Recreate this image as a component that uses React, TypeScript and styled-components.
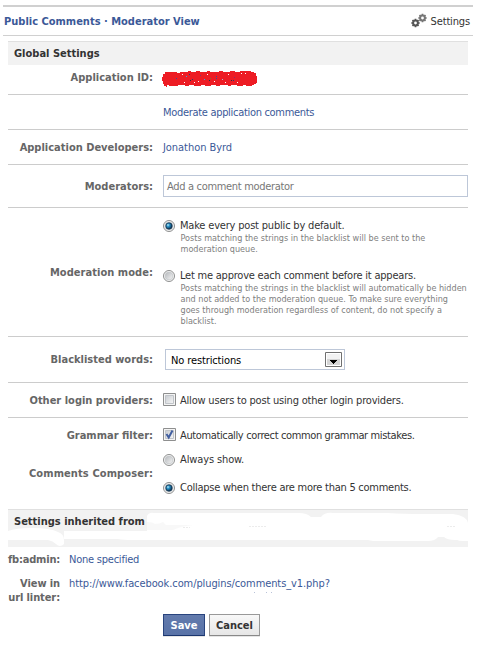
import React from "react";
import styled, { createGlobalStyle, css } from "styled-components";

const Global = createGlobalStyle`
  *, *::before, *::after { box-sizing: border-box; }
  body {
    margin: 0;
    background: #fff;
    color: #333;
    font: 11px/14px "DejaVu Sans Condensed", "DejaVu Sans", sans-serif;
    font-stretch: condensed;
  }
`;

const Page = styled.main`
  width: 479px;
  height: 648px;
  padding: 5px 6px 0 3px;
  overflow: hidden;
`;

const Header = styled.header`
  display: flex;
  justify-content: space-between;
  height: 31px;
  padding: 8px 3px 0 1px;
  border-top: 2px solid #d0d0d0;
  border-bottom: 1px solid #d0d0d0;
  white-space: nowrap;
`;

const Crumbs = styled.nav`
  color: #3b5998;
  font-weight: bold;
`;

const SettingsLink = styled.a`
  display: flex;
  gap: 4px;
  svg { display: block; margin-top: -2px; }
`;

const Text = styled.span<{ $track?: number }>`
  letter-spacing: ${(p) => p.$track ?? 0}px;
  white-space: nowrap;
`;

const Link = styled(Text)`
  color: #3b5998;
`;

const Panel = styled.section`
  width: 460px;
  margin: 5px 0 0 5px;
`;

const Band = styled.h2<{ $height: number }>`
  display: grid;
  height: ${(p) => p.$height}px;
  margin: 0;
  border-top: 1px solid #e0e0e0;
  background: #f2f2f2;
  font-size: 11px;
  > * { grid-area: 1 / 1; }
`;

const BandTitle = styled.span`
  padding: 5px 6px 0;
`;

const Row = styled.div<{ $height: number; $last?: boolean }>`
  display: grid;
  grid-template-columns: 145px 305px;
  column-gap: 10px;
  height: ${(p) => p.$height}px;
  ${(p) => !p.$last && css`border-bottom: 1px solid #ccc;`}
`;

const Label = styled.div<{ $top: number; $track?: number }>`
  padding-top: ${(p) => p.$top}px;
  color: #666;
  font-weight: bold;
  letter-spacing: ${(p) => p.$track ?? 0}px;
  text-align: right;
  white-space: nowrap;
`;

const Value = styled.div<{ $top: number }>`
  padding-top: ${(p) => p.$top}px;
`;

const Redaction = styled.svg`
  display: block;
  margin-left: -2px;
`;

const Input = styled.div`
  height: 22px;
  padding: 4px 3px 0;
  border: 1px solid #bdc7d8;
  color: #777;
`;

const Option = styled.label<{ $after?: number }>`
  display: flex;
  gap: 4px;
  margin-bottom: ${(p) => p.$after ?? 0}px;
  > svg { flex: none; display: block; margin-top: -1px; }
`;

const Hint = styled.p`
  margin: 0 0 1px 0.5px;
  color: #808080;
  font-size: 9px;
  line-height: 11px;
  white-space: nowrap;
`;

const Select = styled.div`
  display: flex;
  justify-content: space-between;
  width: 180px;
  height: 21px;
  margin-left: 2px;
  padding: 2px 2px 0 5px;
  border: 1px solid #bdc7d8;
  color: #000;
  ${Text} { padding-top: 2px; }
`;

const ShortRow = styled.div<{ $height: number; $top: number }>`
  display: grid;
  grid-template-columns: 52px 1fr;
  column-gap: 9px;
  height: ${(p) => p.$height}px;
  padding-top: ${(p) => p.$top}px;
`;

const Actions = styled.div`
  display: flex;
  gap: 4px;
  padding-left: 155px;
`;

const Button = styled.button<{ $primary?: boolean }>`
  width: ${(p) => (p.$primary ? 42 : 51)}px;
  height: 22px;
  padding: 1px 0 0;
  border: 1px solid ${(p) => (p.$primary ? "#29447e" : "#999")};
  border-bottom-color: ${(p) => (p.$primary ? "#1a356e" : "#888")};
  background: ${(p) => (p.$primary ? "linear-gradient(#637bad, #5872a7)" : "linear-gradient(#f8f8f8, #e6e6e6)")};
  box-shadow: 0 1px 0 rgba(0, 0, 0, 0.1);
  color: ${(p) => (p.$primary ? "#fff" : "#333")};
  font: bold 11px/14px "DejaVu Sans Condensed", "DejaVu Sans", sans-serif;
`;

const Gear = ({ x, y, color }: { x: number; y: number; color: string }) => (
  <g transform={`translate(${x} ${y})`} stroke={color} fill="none">
    <circle r="2.4" strokeWidth="2" />
    <path d="M0-4.2V-2.5M0 2.5V4.2M-4.2 0H-2.5M2.5 0H4.2M-3-3l1.2 1.2M1.8 1.8 3 3M-3 3l1.2-1.2M1.8-1.8 3-3" strokeWidth="1.7" />
  </g>
);

const Gears = () => (
  <svg width="16" height="16" viewBox="0 0 16 16">
    <Gear x={4.5} y={10} color="#555" />
    <Gear x={11.5} y={5} color="#777" />
  </svg>
);

const Radio = ({ on = false }: { on?: boolean }) => (
  <svg width="13" height="14" viewBox="0 0 13 14">
    <defs>
      <linearGradient id="dish" x2="1" y2="1">
        <stop stopColor="#b5b8bc" />
        <stop offset="1" stopColor="#f6f6f6" />
      </linearGradient>
      <radialGradient id="dot" cx=".35" cy=".35" r=".65">
        <stop stopColor="#b8eafa" />
        <stop offset=".4" stopColor="#268fc4" />
        <stop offset="1" stopColor="#0b3051" />
      </radialGradient>
    </defs>
    <circle cx="6" cy="8" r="5.5" fill="#f7f7f7" stroke="#8e8f8f" />
    <circle cx="6" cy="8" r="3.9" fill="url(#dish)" stroke="#c2c5c8" strokeWidth=".7" />
    {on && <circle cx="6" cy="8" r="3.2" fill="url(#dot)" stroke="#173753" strokeWidth=".8" />}
  </svg>
);

const Checkbox = ({ on = false }: { on?: boolean }) => (
  <svg width="13" height="13" viewBox="0 0 13 13">
    <defs>
      <linearGradient id="well" x2="1" y2="1">
        <stop stopColor="#c8ccd1" />
        <stop offset="1" stopColor="#f6f6f6" />
      </linearGradient>
    </defs>
    <path d="M.5.5h12v12H.5z" fill="#f4f4f4" stroke="#8e8f8f" />
    <path d="M2.5 2.5h8v8h-8z" fill="url(#well)" stroke="#c0c4c9" />
    {on && <path d="m3.5 6 2.2 3.5L9.5 2.5" fill="none" stroke="#425fa0" strokeWidth="2" />}
  </svg>
);

const DropArrow = () => (
  <svg width="17" height="15" viewBox="0 0 17 15">
    <path d="M.5.5h16v14H.5z" fill="#fff" stroke="#707070" />
    <path d="M2 2h13v5H2z" fill="#f2f2f2" />
    <path d="M2 7h13v6H2z" fill="#d5d5d5" />
    <path d="M5 8h7v1h-1v1h-1v1H9v1H8v-1H7v-1H6V9H5z" fill="#000" />
  </svg>
);

const speckles: [number, number, string][] = [
  [15, 7, "#3054a0"], [25, 5, "#35a8e0"], [28, 3, "#243f73"], [29, 9, "#263040"],
  [31, 8, "#243f73"], [39, 4, "#7d376e"], [43, 8, "#35a8e0"], [48, 9, "#263040"],
  [49, 7, "#807030"], [55, 5, "#3054a0"], [55, 7, "#3054a0"], [61, 8, "#a8b8d8"],
  [67, 3, "#fff"], [70, 9, "#263040"], [72, 9, "#243f73"], [73, 6, "#7d376e"],
  [21, 3, "#fff"], [37, 10, "#fff"], [46, 3, "#fff"], [53, 10, "#fff"], [64, 11, "#fff"],
  [80, 2, "#fff"], [84, 2, "#fff"], [33, 11, "#fff"], [76, 11, "#fff"], [23, 11, "#fff"],
];

export default function App() {
  return (
    <>
      <Global />
      <Page>
        <Header>
          <Crumbs><Text>Public Comments · Moderator View</Text></Crumbs>
          <SettingsLink><Gears /><Text $track={-0.15}>Settings</Text></SettingsLink>
        </Header>
        <Panel>
          <Band $height={24}><BandTitle>Global Settings</BandTitle></Band>
          <Row $height={30}>
            <Label $top={6}>Application ID:</Label>
            <Value $top={6}>
              <Redaction width="97" height="17" viewBox="0 0 97 17" shapeRendering="crispEdges">
                <path fill="#ed1c24" d="M2 3h2V1h12v1h3V1h8V0h3v1h5V0h4v1h7V0h3v1h9V0h4v1h7V0h5v1h5V0h11v1h3v1h2v3h1v7h-1v1h-2v1h-2v1h-6v-1h-3v1h-6v-1h-6v1h-3v-1h-8v1h-4v-1h-5v1h-6v-1h-4v1h-7v-1h-5v1h-4v-1h-7v1H8v-1H6v2H5v-1H3v-2H2v-3H1V6h1z" />
                {speckles.map(([x, y, fill]) => (
                  <rect key={`${x}-${y}`} x={x} y={y} width="1" height="1" fill={fill} />
                ))}
              </Redaction>
            </Value>
          </Row>
          <Row $height={35}>
            <Label $top={11} />
            <Value $top={11}><Link $track={-0.31}>Moderate application comments</Link></Value>
          </Row>
          <Row $height={35}>
            <Label $top={11}>Application Developers:</Label>
            <Value $top={11}><Link $track={-0.05}>Jonathon Byrd</Link></Value>
          </Row>
          <Row $height={43}>
            <Label $top={15}>Moderators:</Label>
            <Value $top={10}><Input><Text $track={-0.32}>Add a comment moderator</Text></Input></Value>
          </Row>
          <Row $height={129}>
            <Label $top={58} $track={0.05}>Moderation mode:</Label>
            <Value $top={11}>
              <Option $after={13}>
                <Radio on />
                <div>
                  <Text $track={-0.19}>Make every post public by default.</Text>
                  <Hint>
                    Posts matching the strings in the blacklist will be sent to the<br />
                    moderation queue.
                  </Hint>
                </div>
              </Option>
              <Option>
                <Radio />
                <div>
                  <Text $track={-0.22}>Let me approve each comment before it appears.</Text>
                  <Hint>
                    Posts matching the strings in the blacklist will automatically be hidden<br />
                    and not added to the moderation queue. To make sure everything<br />
                    goes through moderation regardless of content, do not specify a<br />
                    blacklist.
                  </Hint>
                </div>
              </Option>
            </Value>
          </Row>
          <Row $height={46}>
            <Label $top={16}>Blacklisted words:</Label>
            <Value $top={12}><Select><Text $track={-0.12}>No restrictions</Text><DropArrow /></Select></Value>
          </Row>
          <Row $height={35}>
            <Label $top={11}>Other login providers:</Label>
            <Value $top={11}><Option><Checkbox /><Text $track={-0.2}>Allow users to post using other login providers.</Text></Option></Value>
          </Row>
          <Row $height={30} $last>
            <Label $top={11}>Grammar filter:</Label>
            <Value $top={11}><Option><Checkbox on /><Text $track={-0.37}>Automatically correct common grammar mistakes.</Text></Option></Value>
          </Row>
          <Row $height={61} $last>
            <Label $top={19} $track={0.1}>Comments Composer:</Label>
            <Value $top={5}>
              <Option $after={14}><Radio /><Text $track={-0.12}>Always show.</Text></Option>
              <Option><Radio on /><Text $track={-0.25}>Collapse when there are more than 5 comments.</Text></Option>
            </Value>
          </Row>
          <Band $height={38}>
            <svg width="460" height="37" viewBox="0 0 460 37">
              <path fill="#fff" d="M0 21q8-3 23-3 20 0 27 4 6 2 6 8v4q-4 4-8 0-3-3-8-4H0zM56 21h83V6q2-4 7-3h145q8 0 12 4h10q4-5 12-4h55q15 1 35 1h30q14 2 15 9v17h-13q-8 0-11-3h-6q-3 4-10 4h-55l-5-1H125q-10 0-15-1H56z" />
              <path fill="#fff" d="M447 27h13v4h-5q-8 0-8-4z" />
              <path fill="#f2f2f2" d="M139 12q6 0 8 2 5 0 8-2l3 3q16 0 27 0-12 1-20 5h-26z" opacity=".5" />
              <path d="M175 17.500h7m59-1h18m180 0h8" stroke="#ececec" strokeDasharray="2 1" />
            </svg>
            <BandTitle>Settings inherited from</BandTitle>
          </Band>
          <ShortRow $height={24} $top={6}>
            <Label $top={0} $track={-0.2}>fb:admin:</Label>
            <Link $track={-0.23}>None specified</Link>
          </ShortRow>
          <ShortRow $height={43} $top={6}>
            <Label $top={0} $track={-0.1}>View in<br />url linter:</Label>
            <div>
              <Link $track={-0.09}>http://www.facebook.com/plugins/comments_v1.php?</Link>
              <svg width="220" height="4" viewBox="0 0 220 4" display="block">
                <path d="M185 1.5h1m11 0h1m4 0h1" stroke="#b9c2d8" />
              </svg>
            </div>
          </ShortRow>
          <Actions>
            <Button $primary>Save</Button>
            <Button>Cancel</Button>
          </Actions>
        </Panel>
      </Page>
    </>
  );
}
